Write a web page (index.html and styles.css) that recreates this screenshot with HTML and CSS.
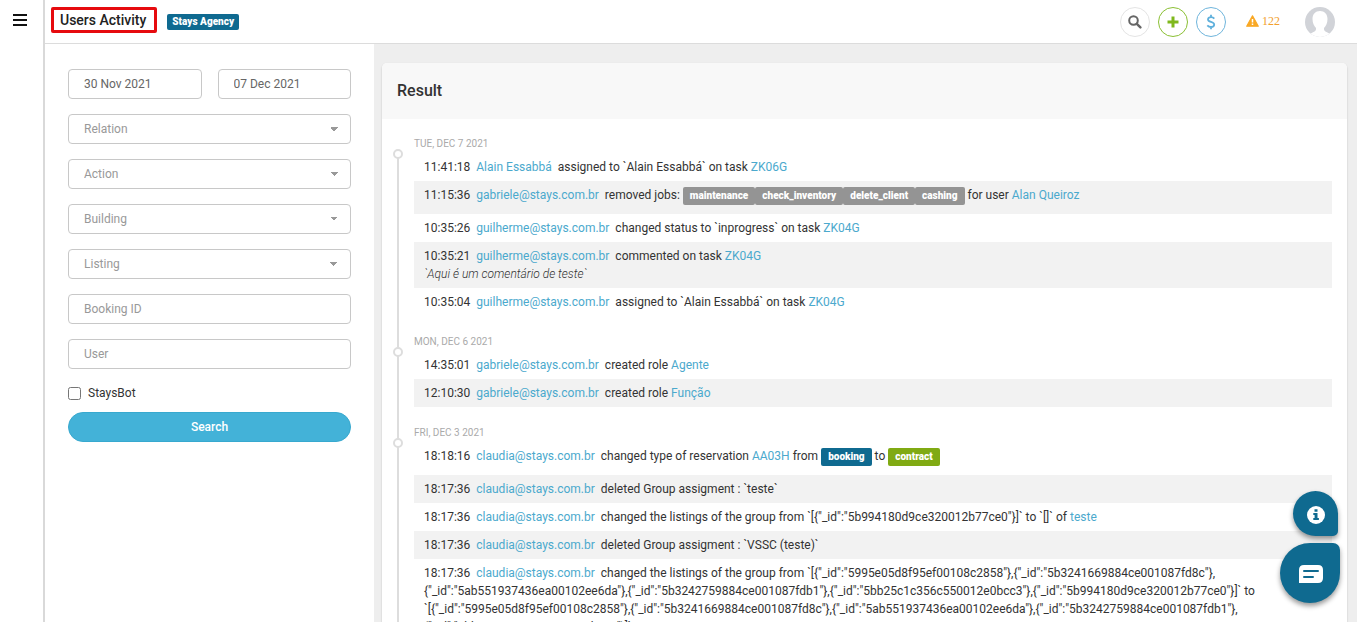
FILE: index.html
```
<!DOCTYPE html>
<html lang="en">
  <head>
    <meta charset="utf-8">
    <title>Users Activity</title>
    <meta name="viewport" content="width=device-width, initial-scale=1.0">
    <link rel="stylesheet" href="styles.css">
  </head>
  <body>
    <div class="app">
      <nav class="rail">
        <button class="menu-btn" type="button" aria-label="Menu">
          <svg width="14" height="12" viewBox="0 0 14 12"><path d="M0 1h14M0 6h14M0 11h14" stroke="#111" stroke-width="2"/></svg>
        </button>
      </nav>

      <div class="main">
        <header class="topbar">
          <h1 class="page-title">Users Activity</h1>
          <span class="label label-blue agency">Stays Agency</span>

          <div class="tools">
            <button class="round-btn" type="button" aria-label="Search">
              <svg width="14" height="14" viewBox="0 0 14 14"><circle cx="5.5" cy="5.5" r="4.3" fill="none" stroke="#666" stroke-width="2"/><path d="M8.8 8.8L12.4 12.4" stroke="#666" stroke-width="2.4" stroke-linecap="round"/></svg>
            </button>
            <button class="round-btn green" type="button" aria-label="Add">
              <svg width="12" height="12" viewBox="0 0 12 12"><path d="M6 0.500v11M0.500 6h11" stroke="#7fb81c" stroke-width="3"/></svg>
            </button>
            <button class="round-btn blue" type="button" aria-label="Payments">
              <svg width="10" height="16" viewBox="0 0 10 16"><path d="M8.300 4.600C7.500 3.600 6.300 3.100 5 3.100C3.200 3.100 2 4 2 5.400C2 8.400 8.200 7.200 8.200 10.500C8.200 12 6.900 13 5 13C3.500 13 2.200 12.400 1.300 11.400M5 0.800v2.500M5 12.800v2.500" fill="none" stroke="#5fb0dc" stroke-width="1.800"/></svg>
            </button>
            <a class="alerts" href="#">
              <svg width="13" height="12" viewBox="0 0 13 12"><path d="M6.500 0.800L12.300 11.200H0.700Z" fill="#f9a825" stroke="#f9a825" stroke-width="1.200" stroke-linejoin="round"/><path d="M6.500 4v3.600M6.500 8.600v1.500" stroke="#fff" stroke-width="1.500"/></svg>
              <span>122</span>
            </a>
            <button class="avatar" type="button" aria-label="Profile">
              <svg width="30" height="30" viewBox="0 0 30 30"><defs><clipPath id="face"><circle cx="15" cy="15" r="15"/></clipPath></defs><g clip-path="url(#face)"><rect width="30" height="30" fill="#d1d3d8"/><path d="M15 4C19.500 4 22.500 7.200 22.500 12C22.500 16 21 19 19 21C18.600 23 19.500 24.300 22 25.200L25 27V30H5V27L8 25.200C10.500 24.300 11.400 23 11 21C9 19 7.500 16 7.500 12C7.500 7.200 10.500 4 15 4Z" fill="#fff"/></g></svg>
            </button>
          </div>
        </header>

        <div class="content">
          <form class="filters">
            <div class="dates">
              <input class="field" type="text" value="30 Nov 2021" aria-label="From">
              <input class="field" type="text" value="07 Dec 2021" aria-label="To">
            </div>
            <select class="field select" aria-label="Relation"><option>Relation</option></select>
            <select class="field select" aria-label="Action"><option>Action</option></select>
            <select class="field select" aria-label="Building"><option>Building</option></select>
            <select class="field select" aria-label="Listing"><option>Listing</option></select>
            <input class="field" type="text" placeholder="Booking ID" aria-label="Booking ID">
            <input class="field" type="text" placeholder="User" aria-label="User">
            <label class="check"><input type="checkbox"> StaysBot</label>
            <button class="search-btn" type="button">Search</button>
          </form>

          <main class="results">
            <section class="card">
              <h2 class="card-title">Result</h2>

              <div class="timeline">
                <div class="day">
                  <h3 class="date">Tue, Dec 7 2021</h3>
                  <div class="row">11:41:18 <a class="who" href="#">Alain Essabbá</a> assigned to `Alain Essabbá` on task <a href="#">ZK06G</a></div>
                  <div class="row">11:15:36 <a class="who" href="#">gabriele@stays.com.br</a> removed jobs: <span class="label">maintenance</span><span class="label">check_inventory</span><span class="label">delete_client</span><span class="label">cashing</span> for user <a href="#">Alan Queiroz</a></div>
                  <div class="row">10:35:26 <a class="who" href="#">guilherme@stays.com.br</a> changed status to `inprogress` on task <a href="#">ZK04G</a></div>
                  <div class="row">10:35:21 <a class="who" href="#">guilherme@stays.com.br</a> commented on task <a href="#">ZK04G</a><br><em>`Aqui é um comentário de teste`</em></div>
                  <div class="row">10:35:04 <a class="who" href="#">guilherme@stays.com.br</a> assigned to `Alain Essabbá` on task <a href="#">ZK04G</a></div>
                </div>

                <div class="day">
                  <h3 class="date">Mon, Dec 6 2021</h3>
                  <div class="row">14:35:01 <a class="who" href="#">gabriele@stays.com.br</a> created role <a href="#">Agente</a></div>
                  <div class="row">12:10:30 <a class="who" href="#">gabriele@stays.com.br</a> created role <a href="#">Função</a></div>
                </div>

                <div class="day">
                  <h3 class="date">Fri, Dec 3 2021</h3>
                  <div class="row">18:18:16 <a class="who" href="#">claudia@stays.com.br</a> changed type of reservation <a href="#">AA03H</a> from <span class="label label-blue">booking</span> to <span class="label label-green">contract</span></div>
                  <div class="row">18:17:36 <a class="who" href="#">claudia@stays.com.br</a> deleted Group assigment : `teste`</div>
                  <div class="row">18:17:36 <a class="who" href="#">claudia@stays.com.br</a> changed the listings of the group from `[{"_id":"5b994180d9ce320012b77ce0"}]` to `[]` of <a href="#">teste</a></div>
                  <div class="row">18:17:36 <a class="who" href="#">claudia@stays.com.br</a> deleted Group assigment : `VSSC (teste)`</div>
                  <div class="row">18:17:36 <a class="who" href="#">claudia@stays.com.br</a> changed the listings of the group from `[{"_id":"5995e05d8f95ef00108c2858"},{"_id":"5b3241669884ce001087fd8c"},{"_id":"5ab551937436ea00102ee6da"},{"_id":"5b3242759884ce001087fdb1"},{"_id":"5bb25c1c356c550012e0bcc3"},{"_id":"5b994180d9ce320012b77ce0"}]` to `[{"_id":"5995e05d8f95ef00108c2858"},{"_id":"5b3241669884ce001087fd8c"},{"_id":"5ab551937436ea00102ee6da"},{"_id":"5b3242759884ce001087fdb1"},{"_id":"5bb25c1c356c550012e0bcc3"}]`</div>
                </div>
              </div>
            </section>
          </main>
        </div>
      </div>
    </div>

    <div class="floaters">
      <button class="bubble bubble-info" type="button" aria-label="Information">
        <svg width="18" height="18" viewBox="0 0 18 18"><circle cx="9" cy="9" r="9" fill="#fff"/><path d="M7.500 3.200h3v2.500h-3zM6.300 7h4.200v5h1.400v2H6.300v-2h1.300V9H6.300z" fill="#0f6a90"/></svg>
      </button>
      <button class="bubble bubble-chat" type="button" aria-label="Chat">
        <svg width="24" height="18" viewBox="0 0 24 18"><path d="M5 0H19Q24 0 24 5V13Q24 18 19 18H0V5Q0 0 5 0Z" fill="#fff"/><path d="M5 6h14M5 12h9" stroke="#0f6a90" stroke-width="2" stroke-linecap="round"/></svg>
      </button>
    </div>
  </body>
</html>
```

FILE: styles.css
```
*, *::before, *::after{
  box-sizing: border-box;
}
body{
  margin: 0;
  height: 100vh;
  overflow: hidden;
  font-family: Roboto, sans-serif;
  font-size: 12px;
  line-height: 18px;
  color: #333;
  background-color: #fff;
}
a{
  color: #4ba9cd;
  text-decoration: none;
}
button{
  font-family: inherit;
  cursor: pointer;
}
h1, h2, h3{
  margin: 0;
}

.app{
  display: flex;
  height: 100vh;
}
.rail{
  flex: none;
  width: 45px;
  border-right: 2px solid #d9d9d9;
}
.menu-btn{
  display: flex;
  padding: 14px 13px;
  border: none;
  background: none;
}
.main{
  flex: 1;
  min-width: 0;
  display: flex;
  flex-direction: column;
}

/* top bar */
.topbar{
  flex: none;
  display: flex;
  align-items: center;
  height: 44px;
  padding: 0 22px 0 6px;
  border-bottom: 1px solid #dcdcdc;
}
.page-title{
  padding: 0 8px 0 6px;
  margin-bottom: 3px;
  border: 3px solid #e60b0f;
  border-radius: 2px;
  font-size: 14px;
  font-weight: 500;
  line-height: 20px;
  color: #222;
}
.tools{
  display: flex;
  align-items: center;
  margin-left: auto;
}
.round-btn{
  display: flex;
  align-items: center;
  justify-content: center;
  width: 30px;
  height: 30px;
  margin-right: 8px;
  padding: 0;
  border: 1px solid #e4e4e4;
  border-radius: 50%;
  background-color: #fff;
}
.green{
  border-color: #8bc034;
}
.blue{
  border-color: #6fb5dc;
}
.alerts{
  display: flex;
  align-items: center;
  gap: 3px;
  margin: 0 25px 2px 12px;
  font-family: "Liberation Serif", serif;
  color: #f2a02c;
}
.avatar{
  display: flex;
  padding: 0;
  border: none;
  background: none;
}

/* labels */
.label{
  display: inline-block;
  padding: 0 7px;
  border-radius: 2px;
  background-color: #949494;
  color: #fff;
  font-size: 10px;
  font-weight: 900;
  line-height: 18px;
}
.label-blue{
  background-color: #0f6a90;
}
.label-green{
  background-color: #80aa13;
}
.agency{
  padding: 0 5px;
  margin-left: 10px;
  line-height: 16px;
}

/* filters */
.content{
  flex: 1;
  min-height: 0;
  display: flex;
}
.filters{
  flex: none;
  display: flex;
  flex-direction: column;
  gap: 15px;
  width: 329px;
  padding: 25px 23px;
}
.dates{
  display: flex;
  gap: 16px;
}
.field{
  width: 100%;
  min-width: 0;
  height: 30px;
  padding: 0 15px;
  border: 1px solid #c8c8c8;
  border-radius: 4px;
  background-color: #fff;
  font-family: inherit;
  font-size: 12px;
  color: #666;
}
.field::placeholder{
  color: #999;
}
.select{
  appearance: none;
  color: #999;
  background-image: linear-gradient(45deg, transparent 50%, #999 50%), linear-gradient(-45deg, transparent 50%, #999 50%);
  background-size: 4px 4px;
  background-repeat: no-repeat;
  background-position: right 16px center, right 12px center;
}
.check{
  display: flex;
  align-items: center;
  gap: 7px;
}
.check input{
  width: 13px;
  height: 13px;
  margin: 0;
}
.search-btn{
  height: 30px;
  margin-top: -5px;
  border: 1px solid #38a9cf;
  border-radius: 15px;
  background-color: #43b2d8;
  color: #fff;
  font-size: 12px;
  font-weight: 500;
}

/* results */
.results{
  flex: 1;
  min-width: 0;
  overflow: hidden;
  padding: 19px 10px 0 8px;
  background-color: #eee;
}
.card{
  border-radius: 5px;
  background-color: #fff;
  box-shadow: 0 1px 2px rgba(0, 0, 0, 0.2);
}
.card-title{
  padding: 18px 15px;
  border-radius: 5px 5px 0 0;
  background-color: #f8f8f8;
  font-size: 16px;
  font-weight: 500;
  line-height: 20px;
}
.timeline{
  padding: 14px 15px 0;
}
.day{
  position: relative;
  padding: 0 0 15px 17px;
}
/* vertical line and its dot */
.day::before{
  content: "";
  position: absolute;
  left: 0;
  top: 21px;
  width: 2px;
  height: 100%;
  background-color: #ddd;
}
.day::after{
  content: "";
  position: absolute;
  left: -4px;
  top: 16px;
  width: 10px;
  height: 10px;
  border: 2px solid #ddd;
  border-radius: 50%;
  background-color: #fff;
}
.date{
  padding-top: 2px;
  font-size: 10px;
  font-weight: 400;
  line-height: 18px;
  text-transform: uppercase;
  color: #aaa;
}
.row{
  padding: 5px 10px;
}
.row:nth-of-type(even){
  background-color: #f2f2f2;
}
.row em{
  font-weight: 300;
}
.row .label{
  margin: 1px 0 4px;
  vertical-align: top;
}
.who{
  margin: 0 3px;
}

/* floating buttons */
.floaters{
  position: fixed;
  right: 17px;
  bottom: 19px;
  display: flex;
  flex-direction: column;
  align-items: flex-end;
  gap: 7px;
}
.bubble{
  display: flex;
  align-items: center;
  justify-content: center;
  padding: 0;
  border: none;
  background-color: #0f6a90;
  box-shadow: 0 3px 5px rgba(0, 0, 0, 0.4);
}
.bubble-info{
  width: 45px;
  height: 45px;
  margin-right: 2px;
  padding-top: 2px;
  border-radius: 50% 50% 5px 50%;
}
.bubble-chat{
  width: 60px;
  height: 60px;
  padding: 2px 0 0 2px;
  border-radius: 50% 7px 50% 50%;
}
```
